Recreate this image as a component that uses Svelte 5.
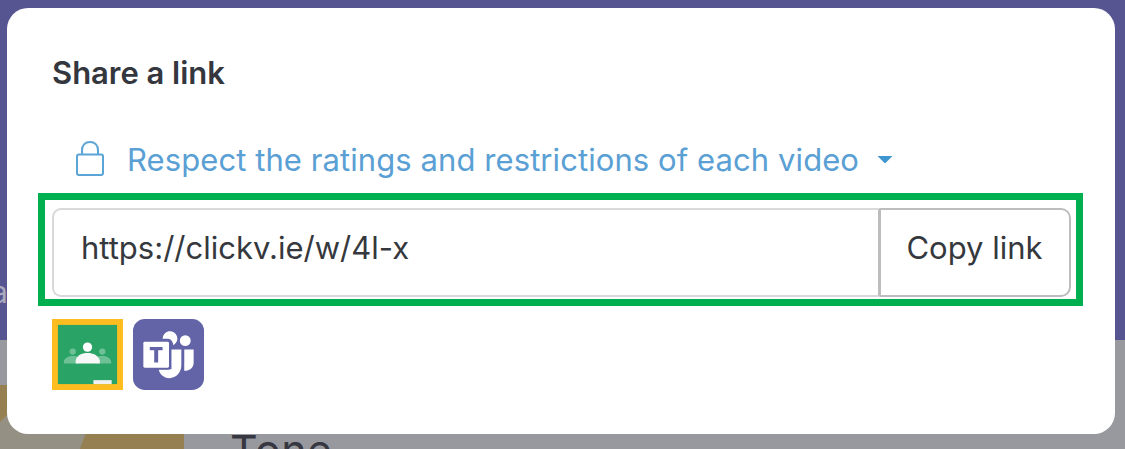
<script>
  const shareUrl = 'https://clickv.ie/w/4l-x';
</script>

<div class="page">
  <div class="banner"><span class="cut">a</span></div>
  <div class="results">
    <div class="thumb">
      <svg viewBox="0 0 184 64" width="184" height="64" aria-hidden="true">
        <rect width="184" height="64" fill="#967f50" />
        <path d="M0 37 7 30 50 10H100L80 64H0Z" fill="#959084" />
      </svg>
    </div>
    <span class="name">Tone</span>
  </div>

  <section class="dialog">
    <h2>Share a link</h2>

    <div class="policy">
      <svg class="lock" viewBox="0 0 30 38" width="30" height="38" aria-hidden="true">
        <g fill="none" stroke="#5aa4d6" stroke-width="2">
          <rect x="2" y="14.500" width="26" height="20.500" rx="2" />
          <path d="M7 14.500V10.500C7 5 10.300 2 15 2s8 3 8 8.500V14.500" />
        </g>
      </svg>
      <span class="policy-text">Respect the ratings and restrictions of each video</span>
      <svg class="caret" viewBox="0 0 16 9" width="16" height="9" aria-hidden="true">
        <path d="M0.500 1H15.500L9 7.500Q8 8.500 7 7.500Z" fill="#3f95cf" />
      </svg>
    </div>

    <div class="highlight">
      <div class="field"><span>{shareUrl}</span></div>
      <button><span>Copy link</span></button>
    </div>

    <div class="apps">
      <svg viewBox="0 0 72 72" width="71" height="71" role="img" aria-label="Google Classroom">
        <rect width="72" height="72" fill="#fdbd20" />
        <rect x="6" y="6" width="60" height="60" fill="#29a466" />
        <g fill="#6ec096">
          <circle cx="21" cy="33" r="3.200" />
          <circle cx="51" cy="33" r="3.200" />
          <path d="M12 45V43C13 39 17 37.500 21 37.500S26 38 28 40V45ZM60 45V43C59 39 55 37.500 51 37.500S46 38 44 40V45Z" />
        </g>
        <circle cx="36" cy="28.500" r="4.700" fill="#fff" />
        <path d="M24 45V42C25 37 30 34.500 36 34.500S47 37 48.500 42V45Z" fill="#f7f7f7" />
        <rect x="42" y="62" width="18.500" height="4" fill="#f1f1f1" />
      </svg>
      <svg viewBox="0 0 72 72" width="71" height="71" role="img" aria-label="Microsoft Teams">
        <rect width="72" height="72" rx="12" fill="#6264a7" />
        <path d="M30 20A7.500 7.500 0 1 1 41 26.500Q40 21 36 20Z" fill="#fff" />
        <circle cx="53" cy="22" r="5.500" fill="#fff" />
        <path d="M39 31H49V47C49 54.500 43.500 60 37 60C31 60 27 56 26 51H39Z" fill="#fff" />
        <path d="M52 31H61.500V44C61.500 49 58 52.500 52 52.500Z" fill="#fff" />
        <rect x="9" y="21.500" width="29.500" height="30" rx="3" fill="#6264a7" />
        <rect x="10.500" y="23" width="26" height="26.500" rx="1.500" fill="#fff" />
        <path d="M17 28.500H30V31.700H25.500V44H21.500V31.700H17Z" fill="#6264a7" />
      </svg>
    </div>
  </section>
</div>

<style>
  :global(body) {
    margin: 0;
    font-family: Inter, "Liberation Sans", sans-serif;
  }
  .page {
    position: relative;
    width: 1125px;
    height: 449px;
    overflow: hidden;
    background: #98999e;
  }
  .banner {
    box-sizing: border-box;
    height: 340px;
    padding-top: 276px;
    background: #565491;
  }
  .cut {
    display: block;
    margin-left: -9px;
    color: #aaa9bd;
    font-size: 30px;
    line-height: 32px;
  }
  .results {
    display: flex;
    height: 109px;
  }
  .thumb {
    margin-top: 45px;
    width: 184px;
    height: 64px;
  }
  .thumb svg {
    display: block;
  }
  .name {
    margin: 85px 0 0 46px;
    color: #363740;
    font-size: 43px;
    letter-spacing: 0.5px;
    line-height: 50px;
  }
  .dialog {
    position: absolute;
    left: 7px;
    top: 8px;
    box-sizing: border-box;
    width: 1108px;
    height: 426px;
    border-radius: 21px;
    background: #fff;
    display: flex;
    flex-direction: column;
    padding: 45px 32px 0 31px;
  }
  h2 {
    margin: 0 0 0 14px;
    height: 40px;
    color: #34373d;
    font-size: 31px;
    font-weight: 600;
    letter-spacing: -0.03px;
    line-height: 40px;
    white-space: nowrap;
  }
  .policy {
    display: flex;
    align-items: center;
    height: 40px;
    margin: 46px 0 14px 38px;
    color: #5aa0d4;
    font-size: 31px;
    letter-spacing: 0.08px;
    line-height: 40px;
    white-space: nowrap;
  }
  .lock {
    margin-left: -1px;
  }
  .policy-text {
    margin: 1px 18px 0 22px;
  }
  .highlight {
    box-sizing: border-box;
    display: flex;
    height: 113px;
    border: 7px solid #00b050;
    padding: 8px 5px 2px 7px;
    color: #35383d;
    font-size: 31px;
    line-height: 40px;
    white-space: nowrap;
  }
  .field {
    box-sizing: border-box;
    flex: 1;
    border: 2px solid #d9d9d9;
    border-right: 0;
    border-radius: 9px 0 0 9px;
    padding: 18px 0 0 27px;
  }
  button {
    box-sizing: border-box;
    width: 193px;
    border: 2px solid #bdbdbd;
    border-left-width: 3px;
    border-radius: 2px 10px 10px 2px;
    padding: 0 1px 9px 0;
    background: #fff;
    color: inherit;
    font: inherit;
  }
  .apps {
    display: flex;
    gap: 10px;
    margin: 13px 0 0 14px;
  }
</style>
